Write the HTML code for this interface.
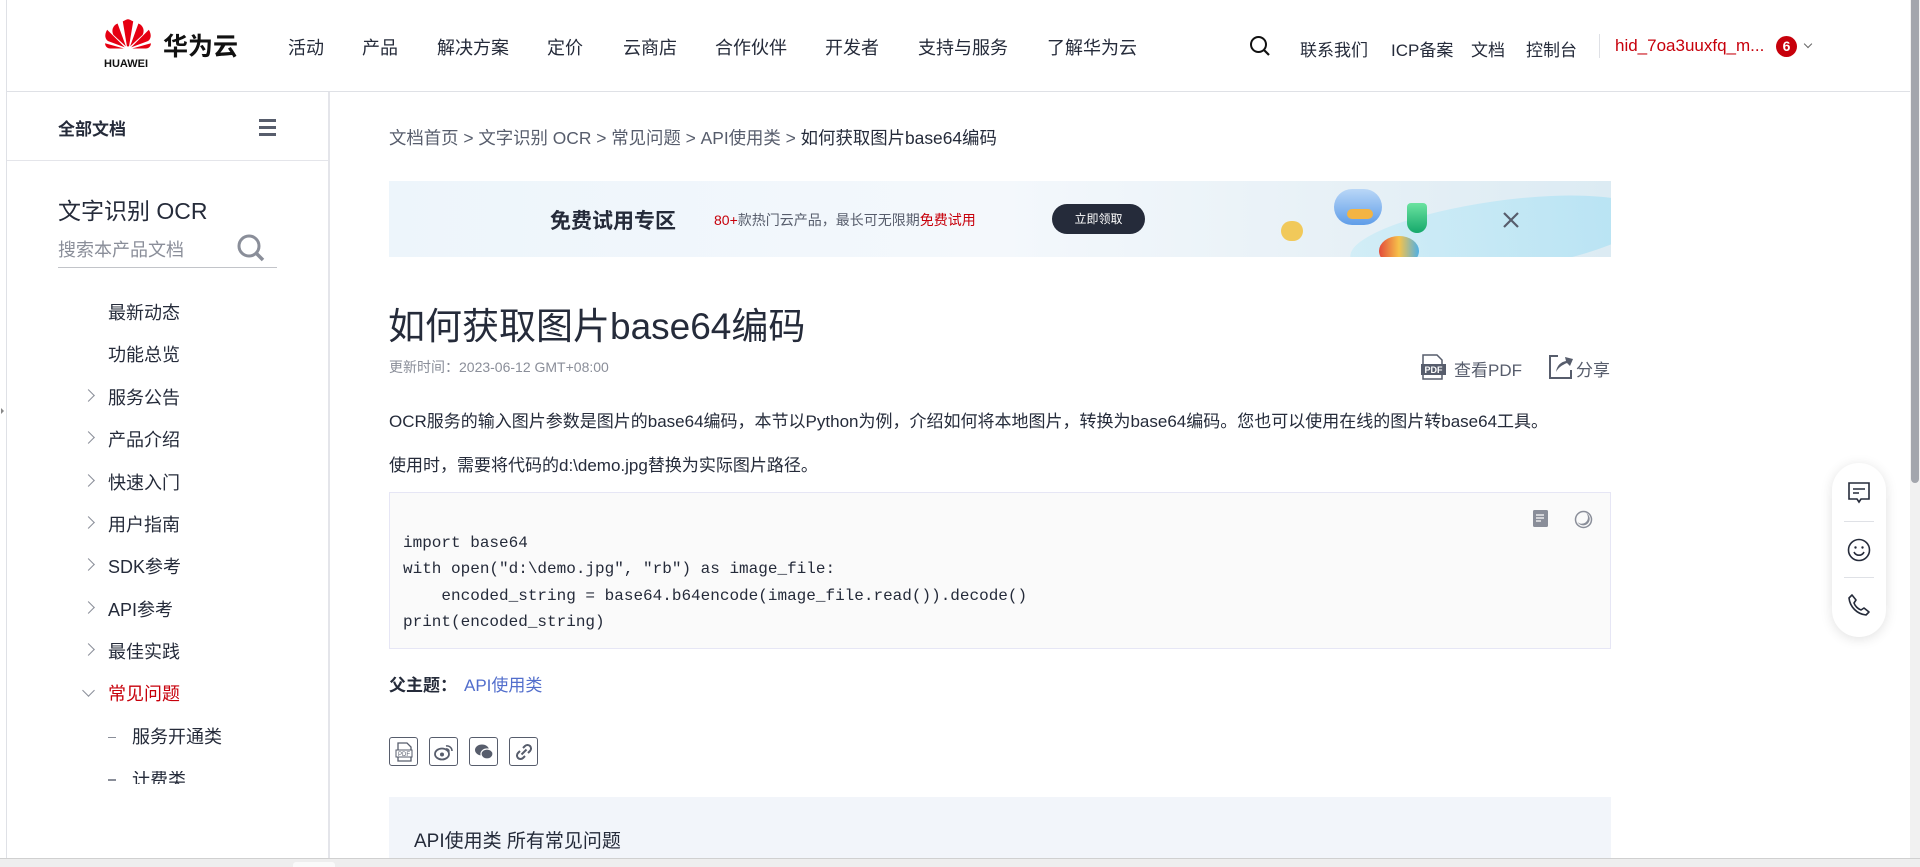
<!DOCTYPE html>
<html><head><meta charset="utf-8">
<style>
*{margin:0;padding:0;box-sizing:border-box}
body{width:1920px;height:867px;overflow:hidden;background:#fff;font-family:"Liberation Sans","Noto Sans CJK SC",sans-serif;color:#252b3a;position:relative}
.a{position:absolute;white-space:nowrap}
.nav{top:34px;font-size:18px;color:#252b3a}
.side{font-size:18px;color:#252b3a;left:108px}
.chev{position:absolute;left:84px;width:9px;height:9px;border-right:1.5px solid #8a8e99;border-bottom:1.5px solid #8a8e99;transform:rotate(-45deg)}
.code{font-family:"Liberation Mono",monospace;font-size:16px;color:#252b3a;left:403px;white-space:pre}
.sb{position:absolute;top:737px;width:29px;height:29px;border:1.5px solid #575d6c;border-radius:3px;display:flex;align-items:center;justify-content:center}
</style></head><body>
<div class="a" style="left:6px;top:0;width:1px;height:858px;background:#dfe1e6"></div>
<div class="a" style="left:7px;top:91px;width:1903px;height:1px;background:#dfe1e6"></div>
<svg class="a" style="left:103px;top:18px" width="50" height="38" viewBox="0 0 48 34">
<g fill="#e60012">
<path d="M22 26 L14 4 C9 6 8 11 10 15 Z"/><path d="M26 26 L34 4 C39 6 40 11 38 15 Z"/>
<path d="M21 27 L4 10 C1 15 2 19 5 21 Z"/><path d="M27 27 L44 10 C47 15 46 19 43 21 Z"/>
<path d="M20 28 L2 23 C2 26 4 28 7 28 Z"/><path d="M28 28 L46 23 C46 26 44 28 41 28 Z"/>
<path d="M23 26 L19 2 C21 1 23 0 24 0 C25 0 27 1 29 2 L25 26 Z"/></g>
</svg>
<div class="a" style="left:104px;top:58px;font-size:11px;font-weight:bold;color:#111">HUAWEI</div>
<div class="a" style="left:163px;top:27px;font-size:25px;font-weight:bold;color:#111">华为云</div>
<div class="a nav" style="left:288px">活动</div>
<div class="a nav" style="left:362px">产品</div>
<div class="a nav" style="left:437px">解决方案</div>
<div class="a nav" style="left:547px">定价</div>
<div class="a nav" style="left:623px">云商店</div>
<div class="a nav" style="left:715px">合作伙伴</div>
<div class="a nav" style="left:825px">开发者</div>
<div class="a nav" style="left:918px">支持与服务</div>
<div class="a nav" style="left:1047px">了解华为云</div>
<svg class="a" style="left:1249px;top:35px" width="22" height="22" viewBox="0 0 22 22"><circle cx="9.5" cy="9.5" r="7.5" fill="none" stroke="#111" stroke-width="2"/><path d="M15 15 L20 20" stroke="#111" stroke-width="2.2"/></svg>
<div class="a nav" style="left:1300px;font-size:17px;top:36px">联系我们</div>
<div class="a nav" style="left:1391px;font-size:17px;top:36px">ICP备案</div>
<div class="a nav" style="left:1471px;font-size:17px;top:36px">文档</div>
<div class="a nav" style="left:1526px;font-size:17px;top:36px">控制台</div>
<div class="a" style="left:1599px;top:34px;width:1px;height:24px;background:#dfe1e6"></div>
<div class="a nav" style="left:1615px;font-size:17px;top:36px;color:#c7000b">hid_7oa3uuxfq_m...</div>
<div class="a" style="left:1776px;top:36px;width:21px;height:21px;border-radius:50%;background:#c7000b;color:#fff;font-size:14px;font-weight:bold;text-align:center;line-height:21px">6</div>
<div class="a" style="left:1805px;top:41px;width:6px;height:6px;border-right:1.2px solid #666;border-bottom:1.2px solid #666;transform:rotate(45deg)"></div>
<div class="a" style="left:1910px;top:0;width:10px;height:858px;background:#f1f1f1"></div>
<div class="a" style="left:1911px;top:0;width:8px;height:483px;background:#a3a6ad;border-radius:0 0 4px 4px"></div>
<div class="a" style="left:328px;top:92px;width:2px;height:766px;background:#e4e5ea"></div>
<div class="a" style="left:58px;top:115px;font-size:17px;font-weight:bold;color:#252b3a">全部文档</div>
<div class="a" style="left:259px;top:119px;width:17px;height:3px;background:#575d6c;box-shadow:0 7px 0 #575d6c,0 14px 0 #575d6c"></div>
<div class="a" style="left:7px;top:160px;width:321px;height:1px;background:#e4e5ea"></div>
<div class="a" style="left:58px;top:192px;font-size:23px;color:#252b3a">文字识别 OCR</div>
<div class="a" style="left:58px;top:236px;font-size:18px;color:#8a8e99">搜索本产品文档</div>
<svg class="a" style="left:236px;top:233px" width="30" height="30" viewBox="0 0 30 30"><circle cx="13" cy="13" r="10" fill="none" stroke="#8a8e99" stroke-width="3"/><path d="M20 20 L27 27" stroke="#8a8e99" stroke-width="3.5"/></svg>
<div class="a" style="left:58px;top:267px;width:219px;height:1px;background:#c2c4c9"></div>
<div class="a side" style="top:299px">最新动态</div>
<div class="a side" style="top:341px">功能总览</div>
<div class="chev" style="top:391px"></div><div class="a side" style="top:384px">服务公告</div>
<div class="chev" style="top:433px"></div><div class="a side" style="top:426px">产品介绍</div>
<div class="chev" style="top:476px"></div><div class="a side" style="top:469px">快速入门</div>
<div class="chev" style="top:518px"></div><div class="a side" style="top:511px">用户指南</div>
<div class="chev" style="top:560px"></div><div class="a side" style="top:553px">SDK参考</div>
<div class="chev" style="top:603px"></div><div class="a side" style="top:596px">API参考</div>
<div class="chev" style="top:645px"></div><div class="a side" style="top:638px">最佳实践</div>
<div class="a" style="left:84px;top:686px;width:9px;height:9px;border-right:1.5px solid #8a8e99;border-bottom:1.5px solid #8a8e99;transform:rotate(45deg)"></div>
<div class="a side" style="top:680px;color:#c7000b">常见问题</div>
<div class="a" style="left:108px;top:737px;width:8px;height:1px;background:#8a8e99"></div>
<div class="a side" style="top:723px;left:132px">服务开通类</div>
<div class="a" style="left:7px;top:771px;width:321px;height:87px;overflow:hidden"><div class="a side" style="top:-5px;left:125px">计费类</div><div class="a" style="left:101px;top:8px;width:8px;height:2px;background:#8a8e99"></div></div>
<div class="a" style="left:7px;top:784px;width:321px;height:74px;background:#fff"></div>
<div class="a" style="left:389px;top:125px;font-size:17.4px;color:#575d6c">文档首页 &gt; 文字识别 OCR &gt; 常见问题 &gt; API使用类 &gt; <span style="color:#252b3a">如何获取图片base64编码</span></div>
<div class="a" style="left:389px;top:181px;width:1222px;height:76px;background:linear-gradient(90deg,#edf5fb 0%,#f4f8fc 50%,#e6f0f6 80%,#dcebf3 100%);overflow:hidden">
 <div class="a" style="left:161px;top:24px;font-size:21px;font-weight:bold;color:#252b3a">免费试用专区</div>
 <div class="a" style="left:325px;top:29px;font-size:14px;color:#575d6c"><span style="color:#c7000b">80+</span>款热门云产品，最长可无限期<span style="color:#c7000b">免费试用</span></div>
 <div class="a" style="left:663px;top:23px;width:93px;height:30px;border-radius:15px;background:#252b3a;color:#fff;font-size:12px;text-align:center;line-height:30px">立即领取</div>
 <div class="a" style="left:960px;top:20px;width:300px;height:70px;border-radius:50%;background:linear-gradient(90deg,#c9ecf7,#a7dff3);opacity:.7;transform:rotate(-8deg)"></div>
 <div class="a" style="left:945px;top:8px;width:48px;height:36px;border-radius:20px;background:linear-gradient(#b9d7f7,#5f9de8)"></div>
 <div class="a" style="left:958px;top:28px;width:26px;height:10px;border-radius:5px;background:#f3b443"></div>
 <div class="a" style="left:1018px;top:22px;width:20px;height:30px;border-radius:4px 4px 10px 10px;background:linear-gradient(#6be3a0,#15a86b)"></div>
 <div class="a" style="left:892px;top:40px;width:22px;height:20px;border-radius:10px;background:#f1c95a"></div>
 <div class="a" style="left:990px;top:55px;width:40px;height:30px;border-radius:50%;background:linear-gradient(90deg,#e34a3a,#f6c24a,#4fb0e6)"></div>
 <svg class="a" style="left:1113px;top:30px" width="18" height="18" viewBox="0 0 18 18"><path d="M2 2 L16 16 M16 2 L2 16" stroke="#575d6c" stroke-width="2.2"/></svg>
</div>
<div class="a" style="left:388px;top:296px;font-size:37px;color:#252b3a">如何获取图片base64编码</div>
<div class="a" style="left:389px;top:357px;font-size:14px;color:#8a8e99">更新时间：2023-06-12 GMT+08:00</div>
<svg class="a" style="left:1420px;top:354px" width="27" height="26" viewBox="0 0 27 26"><path d="M3 1 H17 L22 6 V25 H3 Z" fill="none" stroke="#575d6c" stroke-width="1.5"/><rect x="1" y="10" width="25" height="11" fill="#575d6c"/><text x="13.5" y="19" font-size="9" font-weight="bold" fill="#fff" text-anchor="middle" font-family="Liberation Sans">PDF</text></svg>
<div class="a" style="left:1454px;top:356px;font-size:17px;color:#575d6c">查看PDF</div>
<svg class="a" style="left:1548px;top:354px" width="26" height="26" viewBox="0 0 26 26"><path d="M10 2 H2 V24 H23 V16" fill="none" stroke="#575d6c" stroke-width="2"/><path d="M8 18 C9 11 13 8 18 7 L17 3 L25 5 L22 12 L19 9 C14 11 10 14 8 18 Z" fill="#575d6c"/></svg>
<div class="a" style="left:1576px;top:356px;font-size:17px;color:#575d6c">分享</div>
<div class="a" style="left:389px;top:407px;font-size:17px;color:#252b3a">OCR服务的输入图片参数是图片的base64编码，本节以Python为例，介绍如何将本地图片，转换为base64编码。您也可以使用在线的图片转base64工具。</div>
<div class="a" style="left:389px;top:451px;font-size:17px;color:#252b3a">使用时，需要将代码的d:\demo.jpg替换为实际图片路径。</div>
<div class="a" style="left:389px;top:492px;width:1222px;height:157px;background:#fafafa;border:1px solid #e6e6f5"></div>
<svg class="a" style="left:1532px;top:509px" width="18" height="20" viewBox="0 0 18 20"><rect x="1" y="1" width="15" height="17" rx="1.5" fill="#8a8e99"/><path d="M4 6 H12 M4 9 H12 M4 12 H9" stroke="#fff" stroke-width="1.3"/></svg>
<svg class="a" style="left:1574px;top:510px" width="19" height="19" viewBox="0 0 19 19"><circle cx="9.5" cy="9.5" r="8" fill="none" stroke="#8a8e99" stroke-width="1.5"/><path d="M12 3 A6.5 6.5 0 1 1 3.5 12 A6 6 0 0 0 12 3 Z" fill="#8a8e99"/></svg>
<div class="a code" style="top:534px">import base64</div>
<div class="a code" style="top:560px">with open("d:\demo.jpg", "rb") as image_file:</div>
<div class="a code" style="top:587px">    encoded_string = base64.b64encode(image_file.read()).decode()</div>
<div class="a code" style="top:613px">print(encoded_string)</div>
<div class="a" style="left:389px;top:671px;font-size:17px;font-weight:bold;color:#252b3a">父主题：</div>
<div class="a" style="left:464px;top:671px;font-size:17px;color:#526ecc">API使用类</div>
<div class="sb" style="left:389px"><svg width="20" height="20" viewBox="0 0 20 20"><path d="M4 1 H13 L17 5 V19 H4 Z" fill="none" stroke="#575d6c" stroke-width="1.3"/><rect x="2" y="8" width="16" height="7" fill="#fff" stroke="#575d6c"/><text x="10" y="14" font-size="6" text-anchor="middle" fill="#575d6c" font-family="Liberation Sans">PDF</text></svg></div>
<div class="sb" style="left:429px"><svg width="20" height="18" viewBox="0 0 20 18"><ellipse cx="8" cy="11" rx="7" ry="5.5" fill="none" stroke="#575d6c" stroke-width="1.8"/><circle cx="8" cy="11.5" r="2" fill="#575d6c"/><path d="M12 3 A5 5 0 0 1 18 8 M12 6 A2.5 2.5 0 0 1 15 8.5" fill="none" stroke="#575d6c" stroke-width="1.6"/></svg></div>
<div class="sb" style="left:469px"><svg width="20" height="18" viewBox="0 0 20 18"><ellipse cx="8" cy="7" rx="7" ry="5.5" fill="#575d6c"/><ellipse cx="13" cy="11" rx="6" ry="5" fill="#575d6c" stroke="#fff" stroke-width="1.2"/></svg></div>
<div class="sb" style="left:509px"><svg width="18" height="18" viewBox="0 0 18 18"><path d="M8 5 L10 3 A3 3 0 0 1 15 8 L13 10 M10 13 L8 15 A3 3 0 0 1 3 10 L5 8 M6.5 11.5 L11.5 6.5" fill="none" stroke="#575d6c" stroke-width="2"/></svg></div>
<div class="a" style="left:389px;top:797px;width:1222px;height:61px;background:#f2f5fa"></div>
<div class="a" style="left:414px;top:826px;font-size:19px;color:#252b3a">API使用类 所有常见问题</div>
<div class="a" style="left:1832px;top:463px;width:54px;height:174px;border-radius:27px;background:#fff;box-shadow:0 2px 12px rgba(0,0,0,.12)"></div>
<svg class="a" style="left:1847px;top:481px" width="24" height="24" viewBox="0 0 24 24"><path d="M2 2 H22 V18 H14 L12 21 L10 18 H2 Z" fill="none" stroke="#252b3a" stroke-width="1.6"/><path d="M6 8 H18 M6 12 H12" stroke="#252b3a" stroke-width="1.6"/></svg>
<div class="a" style="left:1844px;top:521px;width:30px;height:1px;background:#dfe1e6"></div>
<svg class="a" style="left:1847px;top:538px" width="24" height="24" viewBox="0 0 24 24"><circle cx="12" cy="12" r="10.5" fill="none" stroke="#252b3a" stroke-width="1.6"/><circle cx="8.5" cy="9.5" r="1.2" fill="#252b3a"/><circle cx="15.5" cy="9.5" r="1.2" fill="#252b3a"/><path d="M7 14 A5.5 5.5 0 0 0 17 14" fill="none" stroke="#252b3a" stroke-width="1.6"/></svg>
<div class="a" style="left:1844px;top:577px;width:30px;height:1px;background:#dfe1e6"></div>
<svg class="a" style="left:1847px;top:593px" width="24" height="24" viewBox="0 0 24 24"><path d="M5 2 L9 7 L7 10 C8 13 11 16 14 17 L17 15 L22 19 L19 22 C10 21 3 14 2 5 Z" fill="none" stroke="#252b3a" stroke-width="1.6" stroke-linejoin="round"/></svg>
<div class="a" style="left:1px;top:408px;width:0;height:0;border-top:3px solid transparent;border-bottom:3px solid transparent;border-left:3px solid #888"></div>
<div class="a" style="left:0;top:858px;width:1920px;height:9px;background:#eeeeee;border-top:1px solid #d0d0d0"></div>
<div class="a" style="left:293px;top:862px;width:42px;height:5px;background:#fafafa;border-radius:3px 3px 0 0"></div>
</body></html>
